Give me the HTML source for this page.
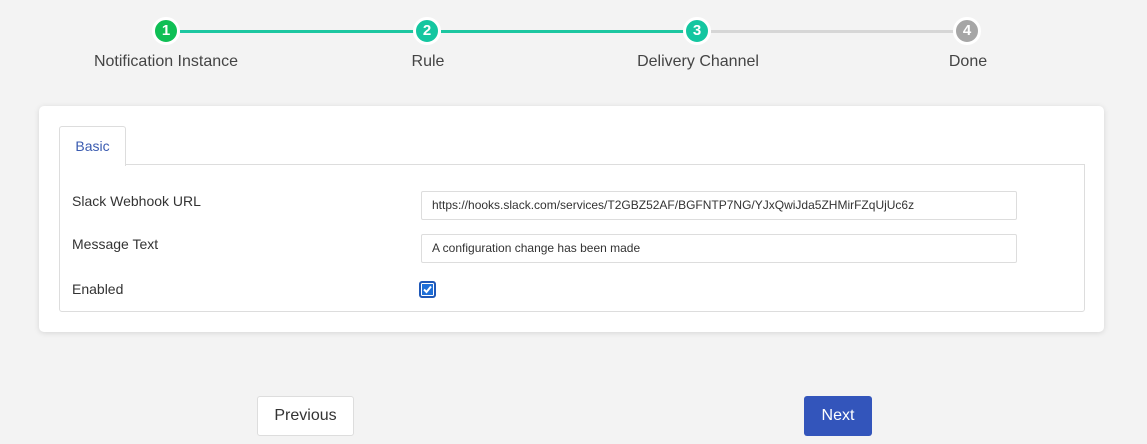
<!DOCTYPE html>
<html><head><style>
body{margin:0;width:1147px;height:444px;background:#f3f3f3;font-family:"Liberation Sans",sans-serif;position:relative;overflow:hidden;color:#333}
.a{position:absolute}
.c{position:absolute;width:22px;height:22px;border-radius:50%;border:3px solid #fff;color:#fff;font-weight:bold;font-size:15px;text-align:center;line-height:22px;top:17px}
.l{position:absolute;height:3px;top:30px}
.t{position:absolute;top:53px;font-size:16px;color:#444;transform:translateX(-50%);white-space:nowrap}
.lab{position:absolute;left:72px;font-size:14px;color:#333}
.in{position:absolute;left:421px;width:584px;height:27px;border:1px solid #ddd;border-radius:2px;background:#fff;font-size:12px;line-height:27px;padding-left:10px;color:#333}
</style></head><body>
<div class="l" style="left:180px;width:236px;background:#1cc6a0"></div>
<div class="l" style="left:441px;width:245px;background:#1cc6a0"></div>
<div class="l" style="left:711px;width:245px;background:#d6d6d6"></div>
<div class="c" style="left:152px;background:#0fbf55">1</div>
<div class="c" style="left:413px;background:#14c6a0">2</div>
<div class="c" style="left:683px;background:#14c6a0">3</div>
<div class="c" style="left:953px;background:#a6a6a6">4</div>
<div class="t" style="left:166px">Notification Instance</div>
<div class="t" style="left:428px">Rule</div>
<div class="t" style="left:698px">Delivery Channel</div>
<div class="t" style="left:968px">Done</div>
<div class="a" style="left:39px;top:106px;width:1065px;height:226px;background:#fff;border-radius:5px;box-shadow:0 1px 6px rgba(0,0,0,.12)"></div>
<div class="a" style="left:59px;top:164px;width:1024px;height:146px;border:1px solid #ddd;border-radius:0 0 3px 3px"></div>
<div class="a" style="left:59px;top:126px;width:65px;height:39px;border:1px solid #ddd;border-bottom:none;border-radius:3px 3px 0 0;background:#fff;color:#3a5bb0;font-size:14px;text-align:center;line-height:38px">Basic</div>
<div class="lab" style="top:193px">Slack Webhook URL</div>
<div class="lab" style="top:236px">Message Text</div>
<div class="lab" style="top:281px">Enabled</div>
<div class="in" style="top:191px">https://hooks.slack.com/services/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</div>
<div class="in" style="top:234px">A configuration change has been made</div>
<div class="a" style="left:419px;top:281px;width:13px;height:13px;border:2px solid #1f58b8;border-radius:3px;background:#1f6fd8;box-shadow:0 0 0 1px #fff inset"><svg width="13" height="13" style="position:absolute;left:0;top:0"><path d="M3 6.5 L5.5 9 L10 3.5" stroke="#fff" stroke-width="2" fill="none"/></svg></div>
<div class="a" style="left:257px;top:396px;width:95px;height:38px;border:1px solid #ddd;border-radius:3px;background:#fff;font-size:16px;text-align:center;line-height:38px;color:#333">Previous</div>
<div class="a" style="left:804px;top:396px;width:68px;height:40px;border-radius:3px;background:#3355bb;font-size:16px;text-align:center;line-height:40px;color:#fff">Next</div>
</body></html>
